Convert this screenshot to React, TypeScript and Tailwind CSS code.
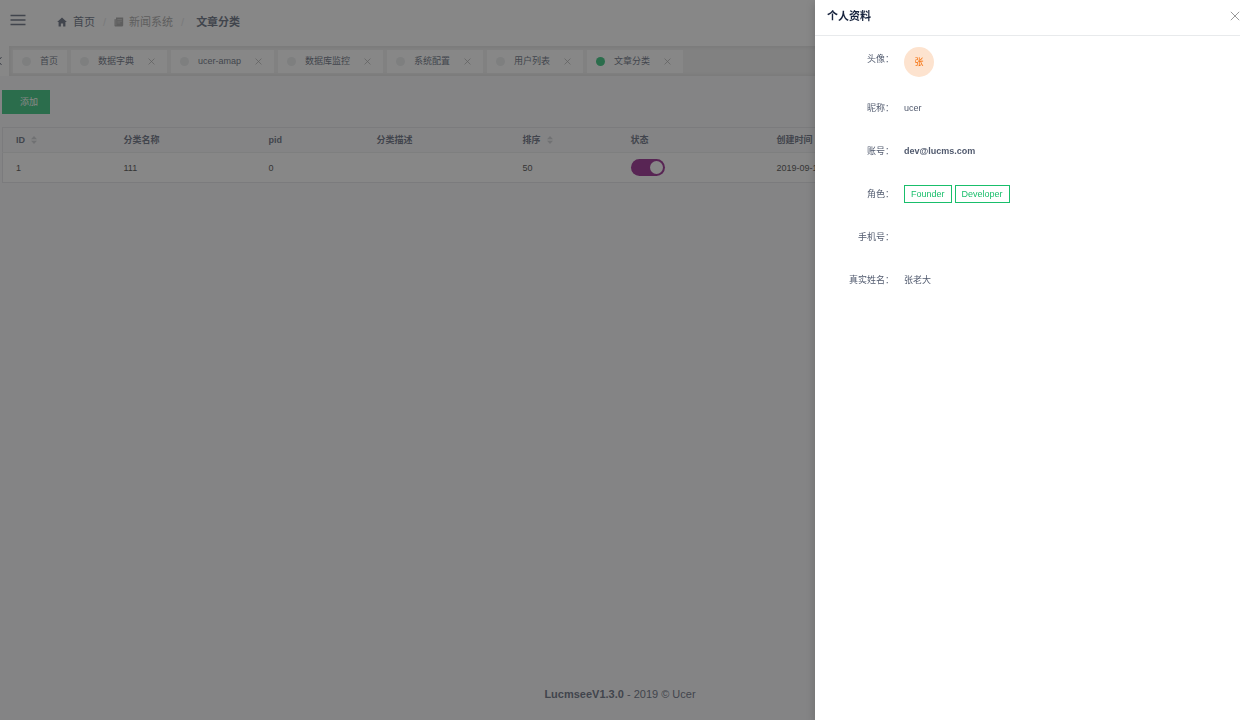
import React, { useState } from "react";
import { IoMdHome } from "react-icons/io";

interface Tag {
  title: string;
  closable: boolean;
}

interface Category {
  id: number;
  name: string;
  pid: number;
  description: string;
  sort: number;
  enabled: boolean;
  createdAt: string;
}

const TAGS: Tag[] = [
  { title: "首页", closable: false },
  { title: "数据字典", closable: true },
  { title: "ucer-amap", closable: true },
  { title: "数据库监控", closable: true },
  { title: "系统配置", closable: true },
  { title: "用户列表", closable: true },
  { title: "文章分类", closable: true },
];

const CATEGORIES: Category[] = [
  { id: 1, name: "111", pid: 0, description: "", sort: 50, enabled: true, createdAt: "2019-09-10" },
];

const ROLES = ["Founder", "Developer"];

const CloseIcon = ({ className }: { className: string }) => (
  <svg viewBox="0 0 10 10" fill="none" stroke="currentColor" className={className} aria-hidden="true">
    <path d="M.8.8l8.4 8.4M9.2.8L.8 9.2" />
  </svg>
);

const SortIcon = () => (
  <svg viewBox="0 0 6 8" fill="currentColor" className="h-2 w-[6px] text-[#c5c8ce]" aria-hidden="true">
    <path d="M3 0l3 3.3H0zM3 8L0 4.7h6z" />
  </svg>
);

const BookIcon = () => (
  <svg viewBox="0 0 10 10" className="h-[10px] w-[10px]" aria-hidden="true">
    <path fill="currentColor" d="M2 .5h7.2v8L8.4 9.5H1.2Q.5 9.5.5 8.8V2.3H2z" />
    <path stroke="#fff" strokeOpacity=".6" strokeWidth=".6" fill="none" d="M3.3 2.5h4.6M3.3 4.2h4.6M3.3 5.9h3M1.9 2.6v5.8" />
  </svg>
);

const Header = () => (
  <header className="flex h-[46px] items-center bg-white pb-[3px] pl-[10px]">
    <button type="button" aria-label="菜单" className="pb-[3px] text-[#515a6e]">
      <svg viewBox="0 0 16 12" fill="none" stroke="currentColor" strokeWidth="1.6" className="h-3 w-4" aria-hidden="true">
        <path d="M.5 1.5h15M.5 6h15M.5 10.5h15" />
      </svg>
    </button>
    <nav className="ml-[30px] flex items-center text-[11px]">
      <a href="#home" className="flex items-center gap-[5px] text-[#515a6e]">
        <IoMdHome className="h-3 w-3" />
        首页
      </a>
      <span className="mx-2 text-[#dcdee2]">/</span>
      <a href="#news" className="flex items-center gap-[5px] text-[#999]">
        <BookIcon />
        新闻系统
      </a>
      <span className="ml-2 mr-3 text-[#dcdee2]">/</span>
      <span className="font-bold text-[#515a6e]">文章分类</span>
    </nav>
  </header>
);

const TagsNav = ({ active, onSelect }: { active: string; onSelect: (title: string) => void }) => (
  <nav className="flex h-[30px] bg-[#f0f0f0]">
    <button type="button" aria-label="向左" className="flex w-[9px] shrink-0 items-center overflow-hidden bg-white">
      <svg viewBox="0 0 2 8" fill="none" stroke="#515a6e" className="h-2 w-[2px]" aria-hidden="true">
        <path d="M1.5 0L0 2M0 6l1.5 2" />
      </svg>
    </button>
    <ul className="flex flex-1 items-center gap-1 pl-1 shadow-[inset_0_0_3px_2px_rgba(100,100,100,0.1)]">
      {TAGS.map((tag) => (
        <li key={tag.title} className="flex h-[23px] items-center bg-white px-[9px] text-[#515a6e]">
          <button type="button" className="flex items-center gap-[9px]" onClick={() => onSelect(tag.title)}>
            <span className={`h-[9px] w-[9px] rounded-full ${tag.title === active ? "bg-[#19be6b]" : "bg-[#e8eaec]"}`} />
            {tag.title}
          </button>
          {tag.closable && (
            <button type="button" aria-label={`关闭 ${tag.title}`} className="ml-[14px] mr-[3px] text-[#999]">
              <CloseIcon className="h-[7px] w-[7px]" />
            </button>
          )}
        </li>
      ))}
    </ul>
  </nav>
);

const CategoryTable = () => {
  const [rows, setRows] = useState<Category[]>(CATEGORIES);

  const toggle = (id: number) =>
    setRows(rows.map((row) => (row.id === id ? { ...row, enabled: !row.enabled } : row)));

  return (
    <table className="w-full table-fixed border border-[#e0e2e6] bg-white text-left">
      <colgroup>
        <col className="w-[108px]" />
        <col className="w-[145px]" />
        <col className="w-[108px]" />
        <col className="w-[146px]" />
        <col className="w-[108px]" />
        <col className="w-[146px]" />
        <col />
      </colgroup>
      <thead>
        <tr className="h-[25px] border-b border-[#e8eaec] bg-[#f8f8f9] text-[#515a6e] [&>th]:pl-[13px]">
          <th>
            <span className="flex items-center gap-[6px]">ID <SortIcon /></span>
          </th>
          <th>分类名称</th>
          <th>pid</th>
          <th>分类描述</th>
          <th>
            <span className="flex items-center gap-[6px]">排序 <SortIcon /></span>
          </th>
          <th>状态</th>
          <th>创建时间</th>
        </tr>
      </thead>
      <tbody className="text-[#333]">
        {rows.map((row) => (
          <tr key={row.id} className="h-[30px] [&>td]:pl-[13px]">
            <td>{row.id}</td>
            <td>{row.name}</td>
            <td>{row.pid}</td>
            <td>{row.description}</td>
            <td>{row.sort}</td>
            <td>
              <input
                type="checkbox"
                role="switch"
                aria-label="状态"
                checked={row.enabled}
                onChange={() => toggle(row.id)}
                className="block h-[17px] w-[34px] appearance-none rounded-full bg-[#ccc] p-[2px] before:block before:h-[13px] before:w-[13px] before:rounded-full before:bg-white checked:bg-[#8b0a80] checked:before:ml-[17px]"
              />
            </td>
            <td>{row.createdAt}</td>
          </tr>
        ))}
      </tbody>
    </table>
  );
};

const ProfileRow = ({ label, children }: { label: string; children?: React.ReactNode }) => (
  <div className="flex gap-[10px]">
    <dt className="w-[67px] shrink-0 py-[6px] text-right">{label}：</dt>
    <dd className="flex min-h-6 items-center">{children}</dd>
  </div>
);

const ProfileDrawer = ({ onClose }: { onClose: () => void }) => (
  <aside
    role="dialog"
    aria-label="个人资料"
    className="fixed inset-y-0 right-0 w-[425px] overflow-hidden bg-white text-[#515a6e] shadow-[0_3px_9px_rgba(0,0,0,0.2)]"
  >
    <div className="flex h-9 items-center justify-between border-b border-[#e8eaec] pb-1 pl-3">
      <h2 className="text-[11px] font-bold text-[#17233d]">个人资料</h2>
      <button type="button" aria-label="关闭" className="text-[#999]" onClick={onClose}>
        <CloseIcon className="h-[10px] w-[10px]" />
      </button>
    </div>
    <dl className="flex flex-col gap-[19px] py-[11px] pl-3">
      <ProfileRow label="头像">
        <span className="flex h-[30px] w-[30px] items-center justify-center rounded-full bg-[#fde3cf] text-[#f56a00]">张</span>
      </ProfileRow>
      <ProfileRow label="昵称">ucer</ProfileRow>
      <ProfileRow label="账号">
        <b>dev@lucms.com</b>
      </ProfileRow>
      <ProfileRow label="角色">
        <span className="flex gap-[3px]">
          {ROLES.map((role) => (
            <span key={role} className="border border-[#19be6b] px-[6px] py-[2px] text-[#19be6b]">{role}</span>
          ))}
        </span>
      </ProfileRow>
      <ProfileRow label="手机号" />
      <ProfileRow label="真实姓名">张老大</ProfileRow>
    </dl>
  </aside>
);

const App = () => {
  const [drawerOpen, setDrawerOpen] = useState(true);
  const [activeTag, setActiveTag] = useState("文章分类");

  return (
    <div className="flex min-h-screen flex-col bg-[#f8f8f9] font-['Liberation_Sans','Noto_Sans_CJK_SC',sans-serif] text-[9px] leading-3">
      <Header />
      <TagsNav active={activeTag} onSelect={setActiveTag} />
      <main className="flex-1 pl-[2px] pt-[14px]">
        <button type="button" className="mb-[13px] block h-6 bg-[#19be6b] pl-[18px] pr-3 text-white">
          添加
        </button>
        <CategoryTable />
      </main>
      <footer className="pb-5 text-center text-[11px] text-[#515a6e]">
        <b>LucmseeV1.3.0</b> - 2019 © Ucer
      </footer>
      {drawerOpen && (
        <>
          <div className="fixed inset-0 bg-[#373737]/60" onClick={() => setDrawerOpen(false)} />
          <ProfileDrawer onClose={() => setDrawerOpen(false)} />
        </>
      )}
    </div>
  );
};

export default App;
